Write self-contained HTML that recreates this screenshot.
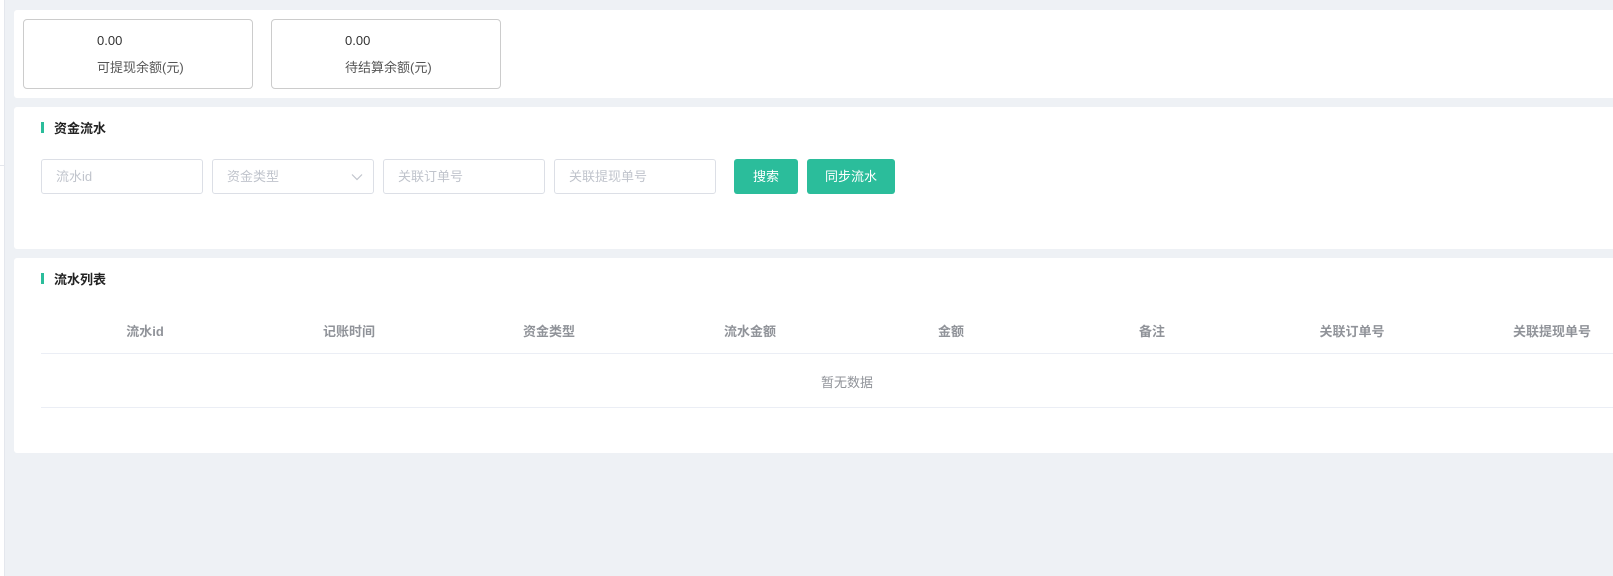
<!DOCTYPE html><html><head><meta charset="utf-8"><style>
*{margin:0;padding:0;box-sizing:border-box}
body{width:1613px;height:576px;background:#eef1f5;font-family:"Liberation Sans","Noto Sans CJK SC",sans-serif;font-size:13px;color:#333;position:relative;overflow:hidden}
.a{position:absolute}
.panel{background:#fff;left:14px;right:0;border-radius:3px 0 0 3px}
.box{border:1px solid #ccc;border-radius:4px;top:19px;height:70px;width:230px;background:#fff}
.box .v{position:absolute;left:73px;top:13px;font-size:13px;color:#333}
.box .l{position:absolute;left:73px;top:37px;font-size:13px;color:#555}
.ttl{font-weight:bold;font-size:13px;color:#222}
.bar{width:3px;height:11px;background:#2bbd9b}
.inp{top:159px;height:35px;width:162px;border:1px solid #dcdfe6;border-radius:3px;color:#c0c4cc;padding-left:14px;line-height:33px;font-size:13px;background:#fff}
.btn{top:159px;height:35px;background:#2bbd9b;color:#fff;border-radius:3px;text-align:center;line-height:35px;font-size:13px}
.th{top:321px;font-weight:bold;color:#909399;font-size:13px;width:200px;text-align:center}
</style></head><body>
<div class="a" style="left:0;top:0;width:5px;height:576px;background:#fff;border-right:1px solid #e4e7ed"></div>
<div class="a" style="left:0;top:165px;width:5px;height:1px;background:#e4e7ed"></div>
<div class="a panel" style="top:10px;height:88px"></div>
<div class="a box" style="left:23px"><div class="v">0.00</div><div class="l">可提现余额(元)</div></div>
<div class="a box" style="left:271px"><div class="v">0.00</div><div class="l">待结算余额(元)</div></div>
<div class="a panel" style="top:107px;height:142px"></div>
<div class="a bar" style="left:41px;top:122px"></div>
<div class="a ttl" style="left:54px;top:118px">资金流水</div>
<div class="a inp" style="left:41px">流水id</div>
<div class="a inp" style="left:212px">资金类型<svg class="a" style="right:10px;top:13px" width="12" height="8" viewBox="0 0 12 8"><path d="M1 1.5L6 6.5L11 1.5" fill="none" stroke="#c0c4cc" stroke-width="1.2"/></svg></div>
<div class="a inp" style="left:383px">关联订单号</div>
<div class="a inp" style="left:554px">关联提现单号</div>
<div class="a btn" style="left:734px;width:64px">搜索</div>
<div class="a btn" style="left:807px;width:88px">同步流水</div>
<div class="a panel" style="top:258px;height:195px"></div>
<div class="a bar" style="left:41px;top:273px"></div>
<div class="a ttl" style="left:54px;top:269px">流水列表</div>
<div class="a th" style="left:45px">流水id</div>
<div class="a th" style="left:249px">记账时间</div>
<div class="a th" style="left:449px">资金类型</div>
<div class="a th" style="left:650px">流水金额</div>
<div class="a th" style="left:851px">金额</div>
<div class="a th" style="left:1052px">备注</div>
<div class="a th" style="left:1252px">关联订单号</div>
<div class="a th" style="left:1452px">关联提现单号</div>
<div class="a" style="left:41px;right:0;top:353px;height:1px;background:#ebeef5"></div>
<div class="a" style="left:41px;width:1612px;top:372px;text-align:center;color:#909399;font-size:13px">暂无数据</div>
<div class="a" style="left:41px;right:0;top:407px;height:1px;background:#ebeef5"></div>
</body></html>
